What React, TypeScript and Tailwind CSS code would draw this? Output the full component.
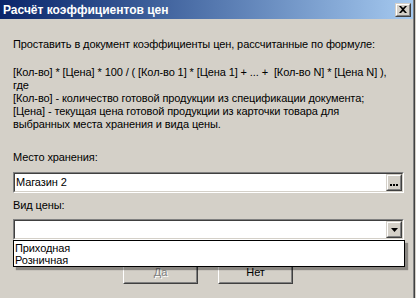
import React from "react";

function Raised({ className = "", children }: { className?: string; children?: React.ReactNode }) {
  return (
    <div className={"border border-t-[#d4d0c8] border-l-[#d4d0c8] border-b-[#404040] border-r-[#404040] " + className}>
      <div className="w-full h-full border border-t-white border-l-white border-b-[#808080] border-r-[#808080] bg-[#d4d0c8] flex items-center justify-center">
        {children}
      </div>
    </div>
  );
}

function Sunken({ className = "", children }: { className?: string; children?: React.ReactNode }) {
  return (
    <div className={"border border-t-[#808080] border-l-[#808080] border-b-white border-r-white " + className}>
      <div className="w-full h-full border border-t-[#404040] border-l-[#404040] border-b-[#d4d0c8] border-r-[#d4d0c8] bg-white flex items-center">
        {children}
      </div>
    </div>
  );
}

function PushButton({ label, disabled }: { label: string; disabled?: boolean }) {
  return (
    <div className="w-[75px] h-[23px] border border-t-white border-l-white border-b-[#404040] border-r-[#404040]">
      <div className="w-full h-full border border-t-[#d4d0c8] border-l-[#d4d0c8] border-b-[#808080] border-r-[#808080] flex items-center justify-center">
        {disabled ? (
          <span className="text-[#808080] [text-shadow:1px_1px_0_#ffffff]">{label}</span>
        ) : (
          <span className="text-black">{label}</span>
        )}
      </div>
    </div>
  );
}

export default function App() {
  return (
    <div className="flex w-[416px] h-[298px] bg-[#d4d0c8] overflow-hidden font-['Liberation_Sans',Arial,sans-serif] text-[11px] leading-[13px] text-black">
      <div className="flex flex-col w-[413px]">
        <div className="h-[19px] bg-gradient-to-r from-[#0a246a] to-[#a6caf0] flex items-center justify-between pl-[3px] pr-[2px]">
          <span className="text-white font-bold text-[12px] leading-[14px]">Расчёт коэффициентов цен</span>
          <Raised className="w-[16px] h-[14px]">
            <svg width="8" height="7" viewBox="0 0 8 7">
              <path d="M0 0h2l2 2 2-2h2L5 3.5 8 7H6L4 5 2 7H0l3-3.5z" fill="#000" />
            </svg>
          </Raised>
        </div>
        <div className="flex flex-col pl-[13px] pr-[9px] pt-[19px] tracking-[-0.1px]">
          <p>Проставить в документ коэффициенты цен, рассчитанные по формуле:</p>
          <p className="mt-[15px] whitespace-pre">
            {"[Кол-во] * [Цена] * 100 / ( [Кол-во 1] * [Цена 1] + ... +  [Кол-во N] * [Цена N] ),"}
            <br />
            {"где"}
            <br />
            {"[Кол-во] - количество готовой продукции из спецификации документа;"}
            <br />
            {"[Цена] - текущая цена готовой продукции из карточки товара для"}
            <br />
            {"выбранных места хранения и вида цены."}
          </p>
          <p className="mt-[20px]">Место хранения:</p>
          <Sunken className="mt-[8px] h-[21px] w-[391px]">
            <span className="pl-[1px] flex-1">Магазин 2</span>
            <Raised className="w-[16px] h-[17px]">
              <svg width="8" height="8" viewBox="0 0 8 8">
                <rect x="0" y="5" width="2" height="2" fill="#000" />
                <rect x="3" y="5" width="2" height="2" fill="#000" />
                <rect x="6" y="5" width="2" height="2" fill="#000" />
              </svg>
            </Raised>
          </Sunken>
          <p className="mt-[6px]">Вид цены:</p>
          <div className="relative mt-[7px] w-[391px]">
            <Sunken className="h-[21px] w-[391px]">
              <span className="flex-1" />
              <Raised className="w-[16px] h-[17px]">
                <svg width="7" height="4" viewBox="0 0 7 4">
                  <path d="M0 0h7L3.5 4z" fill="#000" />
                </svg>
              </Raised>
            </Sunken>
            <div className="absolute left-0 top-[21px] w-[392px] h-[27px] bg-white border border-black shadow-[3px_3px_1px_rgba(0,0,0,0.35)] pt-[1px] pl-[1px] leading-[12px] z-10">
              <div>Приходная</div>
              <div>Розничная</div>
            </div>
          </div>
          <div className="flex mt-[21px] pl-[110px] gap-[20px]">
            <PushButton label="Да" disabled />
            <PushButton label="Нет" />
          </div>
        </div>
      </div>
      <div className="w-px h-full bg-[#808080]" />
      <div className="w-px h-full bg-[#404040]" />
      <div className="w-px h-full bg-[#d4d0c8]" />
    </div>
  );
}
